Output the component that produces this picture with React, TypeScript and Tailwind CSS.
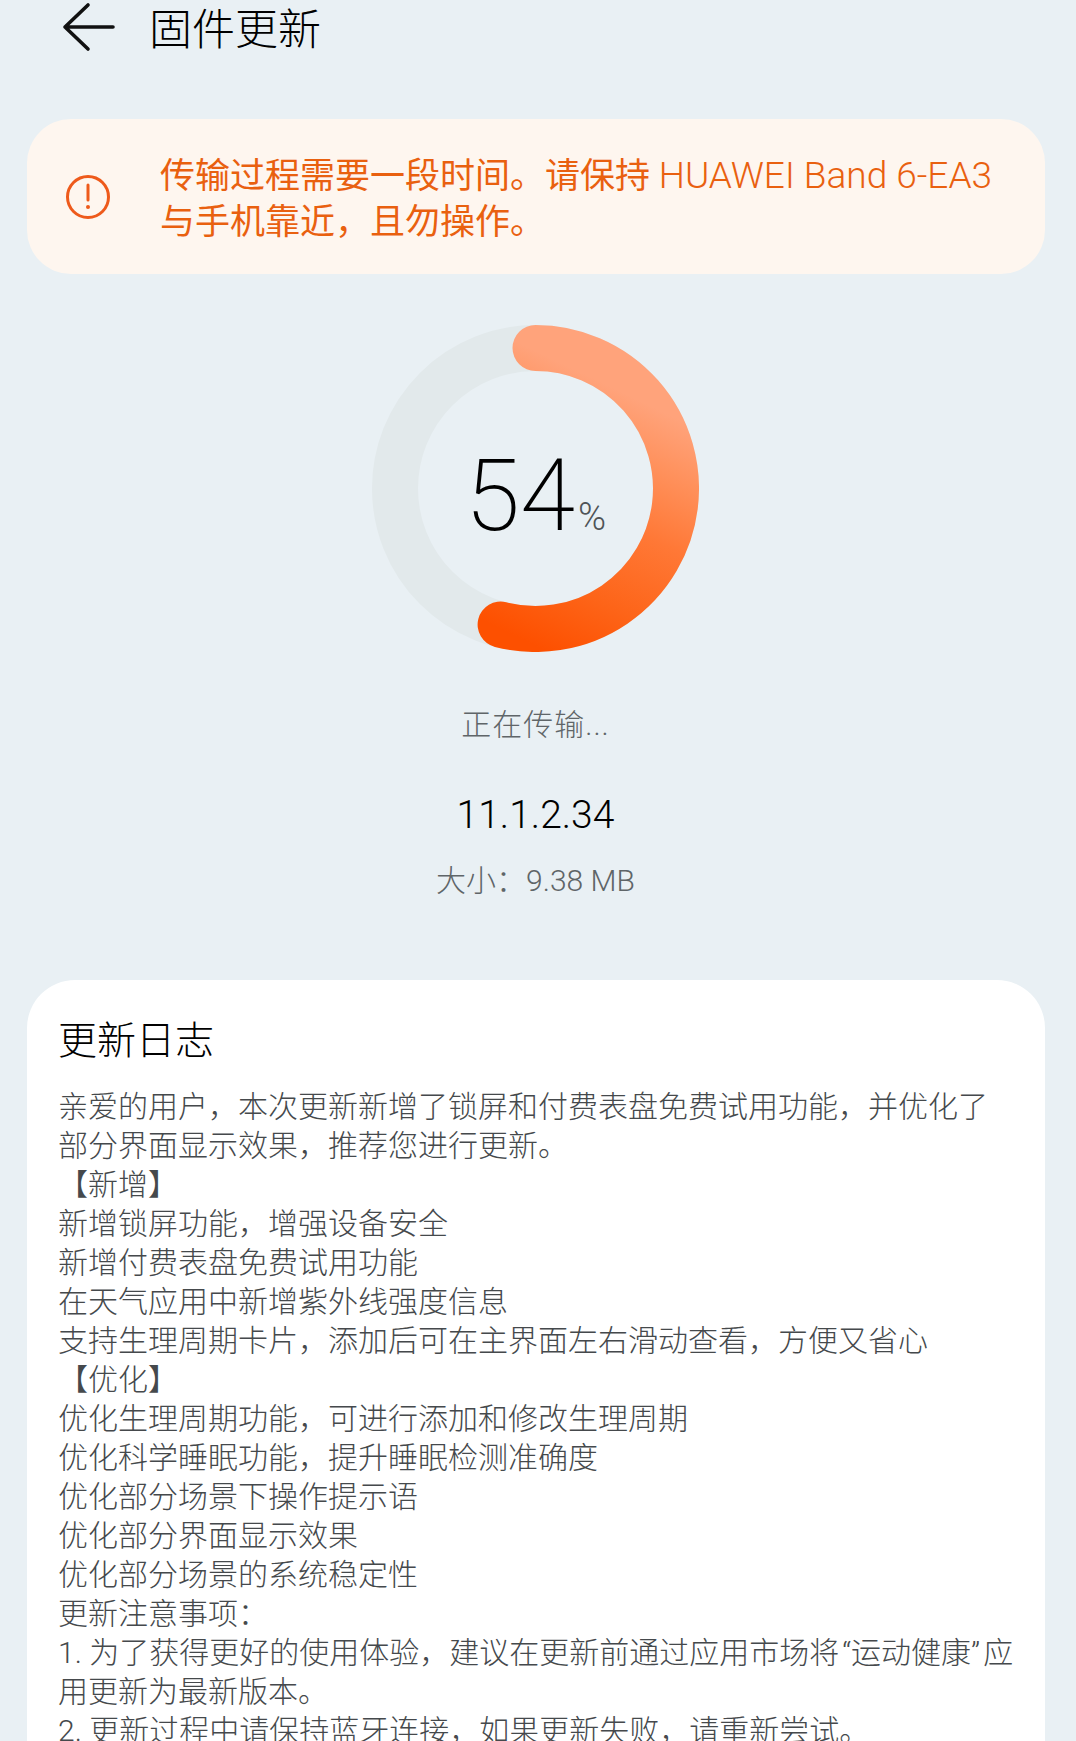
const LINES = [
  '亲爱的用户，本次更新新增了锁屏和付费表盘免费试用功能，并优化了部分界面显示效果，推荐您进行更新。',
  '【新增】',
  '新增锁屏功能，增强设备安全',
  '新增付费表盘免费试用功能',
  '在天气应用中新增紫外线强度信息',
  '支持生理周期卡片，添加后可在主界面左右滑动查看，方便又省心',
  '【优化】',
  '优化生理周期功能，可进行添加和修改生理周期',
  '优化科学睡眠功能，提升睡眠检测准确度',
  '优化部分场景下操作提示语',
  '优化部分界面显示效果',
  '优化部分场景的系统稳定性',
  '更新注意事项：',
]

function ProgressRing() {
  return (
    <div className="relative w-[327px] h-[327px]">
      <svg width="327" height="327" viewBox="0 0 327 327" fill="none">
        <defs>
          <linearGradient id="ring" gradientUnits="userSpaceOnUse" x1="235" y1="60" x2="120" y2="300">
            <stop offset="0" stopColor="#ffa37b" />
            <stop offset="0.22" stopColor="#ff8f59" />
            <stop offset="0.45" stopColor="#ff7836" />
            <stop offset="0.75" stopColor="#fd6418" />
            <stop offset="1" stopColor="#fd5000" />
          </linearGradient>
        </defs>
        <circle cx="163.5" cy="163.5" r="140.5" stroke="#e2e9eb" strokeWidth="46" />
        <path
          d="M163.5 23A140.5 140.5 0 1 1 128.6 299.6"
          stroke="url(#ring)"
          strokeWidth="46"
          strokeLinecap="round"
        />
      </svg>
      <div className="absolute inset-0 flex items-center justify-center">
        <div className="flex items-baseline pt-[14px]">
          <span className="text-[100px] leading-none font-extralight text-black font-['Roboto',sans-serif]">54</span>
          <span className="text-[38px] leading-none font-light text-[#4f5457] ml-[3px] font-['Roboto',sans-serif]">%</span>
        </div>
      </div>
    </div>
  )
}

export default function App() {
  return (
    <div
      lang="zh-CN"
      className="w-[1076px] h-[1741px] overflow-hidden bg-[#e9f0f4] font-['Roboto','Noto_Sans_CJK_SC',sans-serif] font-light"
    >
      <div className="w-[1071px]">
        <div className="h-[58px] flex items-center">
          <svg className="ml-[61px] -mt-[4px]" width="54" height="50" viewBox="0 0 54 50" fill="none">
            <path d="M27 3L4 25L27 47M4 25H52" stroke="#111" strokeWidth="3.6" strokeLinecap="round" strokeLinejoin="round" />
          </svg>
          <h1 className="ml-[34px] mt-[2px] text-[43px] leading-none font-light text-black">固件更新</h1>
        </div>

        <div className="mt-[61px] ml-[27px] mr-[26px] h-[155px] rounded-[44px] bg-[#fef6ef] flex items-center">
          <svg className="ml-[38px] shrink-0" width="46" height="46" viewBox="0 0 46 46" fill="none">
            <circle cx="23" cy="23" r="20.5" stroke="#ee5a1b" strokeWidth="3" />
            <path d="M23 11V26" stroke="#ee5a1b" strokeWidth="3" strokeLinecap="round" />
            <circle cx="23" cy="33" r="2" fill="#ee5a1b" />
          </svg>
          <p className="ml-[49px] mt-[6px] text-[35px] leading-[46px] text-[#e9600f] font-normal whitespace-nowrap">
            传输过程需要一段时间。请保持 <span className="text-[37px] font-light">HUAWEI Band 6-EA3</span>
            <br />
            与手机靠近，且勿操作。
          </p>
        </div>

        <div className="mt-[51px] flex flex-col items-center">
          <ProgressRing />
          <p className="mt-[53px] text-[30px] leading-[40px] text-[#5f6568] tracking-[1px]">正在传输...</p>
          <p className="mt-[50px] text-[39px] leading-[40px] text-black">11.1.2.34</p>
          <p className="mt-[26px] text-[30px] leading-[40px] text-[#5f6568]">大小：9.38 MB</p>
        </div>

        <div className="mt-[79px] ml-[27px] mr-[26px] rounded-t-[48px] bg-white pl-[31px] pr-[28px] pt-[39px]">
          <h2 className="text-[39px] leading-[44px] font-light text-black">更新日志</h2>
          <div className="mt-[24px] text-[30px] leading-[39px] text-[#45494c]">
            {LINES.map((line) => (
              <p key={line}>{line}</p>
            ))}
            <p>
              1. 为了获得更好的使用体验，建议在更新前通过应用市场将<span className="px-[3px]">“运动健康”</span>应用更新为最新版本。
            </p>
            <p>2. 更新过程中请保持蓝牙连接，如果更新失败，请重新尝试。</p>
          </div>
        </div>
      </div>
    </div>
  )
}
